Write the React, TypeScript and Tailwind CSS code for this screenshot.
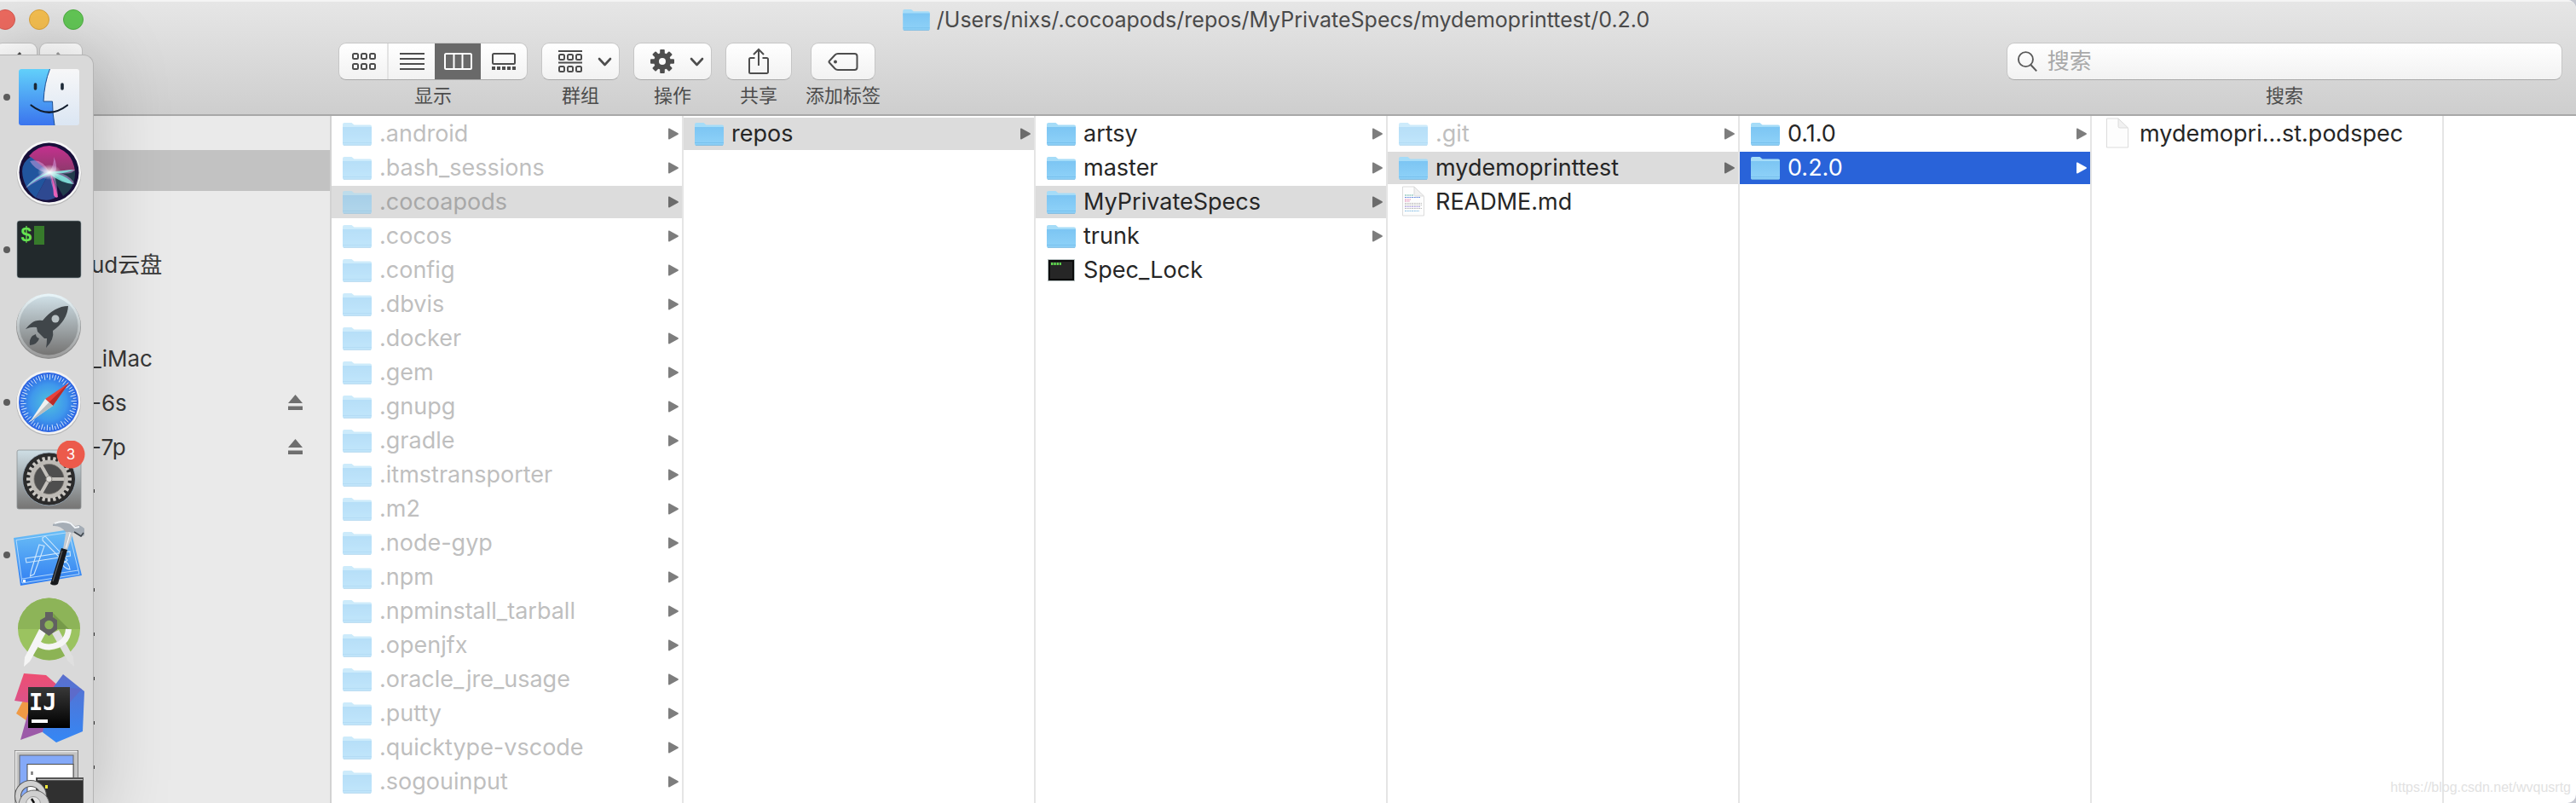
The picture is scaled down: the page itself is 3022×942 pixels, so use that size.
import type { ReactNode } from 'react';
import clsx from 'clsx';

type Kind = 'folder' | 'doc' | 'markdown' | 'exec';

interface Entry {
  name: string;
  kind?: Kind;
  hidden?: boolean;
  state?: 'path' | 'active';
}

const hiddenFolders = [
  '.android', '.bash_sessions', '.cocoapods', '.cocos', '.config', '.dbvis', '.docker',
  '.gem', '.gnupg', '.gradle', '.itmstransporter', '.m2', '.node-gyp', '.npm',
  '.npminstall_tarball', '.openjfx', '.oracle_jre_usage', '.putty', '.quicktype-vscode',
  '.sogouinput',
];

const columns: Entry[][] = [
  hiddenFolders.map((name) => ({
    name,
    hidden: true,
    state: name === '.cocoapods' ? 'path' : undefined,
  })),
  [{ name: 'repos', state: 'path' }],
  [
    { name: 'artsy' },
    { name: 'master' },
    { name: 'MyPrivateSpecs', state: 'path' },
    { name: 'trunk' },
    { name: 'Spec_Lock', kind: 'exec' },
  ],
  [
    { name: '.git', hidden: true },
    { name: 'mydemoprinttest', state: 'path' },
    { name: 'README.md', kind: 'markdown' },
  ],
  [{ name: '0.1.0' }, { name: '0.2.0', state: 'active' }],
  [{ name: 'mydemopri...st.podspec', kind: 'doc' }],
];

function FolderShape() {
  return (
    <>
      <path d="M0 3a2 2 0 0 1 2-2h8.500l3 2.500H32a2 2 0 0 1 2 2V10H0z" fill="#a5dcf8" />
      <path d="M0 6h34v20a1.500 1.500 0 0 1-1.500 1.500h-31A1.500 1.500 0 0 1 0 26z" fill="url(#folder)" />
      <path d="M0 24.500h34" stroke="#74bdea" strokeWidth="0.800" />
      <path d="M1 27.300h32" stroke="#6fb2dc" strokeWidth="0.800" />
    </>
  );
}

function EntryIcon({ kind = 'folder', faded }: { kind?: Kind; faded?: boolean }) {
  if (kind === 'folder') {
    return (
      <svg className={clsx('h-7 w-[34px] shrink-0', faded && 'opacity-55')} viewBox="0 0 34 28">
        <FolderShape />
      </svg>
    );
  }
  if (kind === 'exec') {
    return (
      <svg className="h-7 w-[34px] shrink-0" viewBox="0 0 34 28">
        <rect x="1" y="1" width="32" height="26" fill="#b5bfc0" />
        <rect x="2" y="2" width="30" height="24" fill="#0c0c0c" />
        <rect x="4" y="4" width="26" height="20" fill="#262626" />
        <path d="M5 6.500h2.500M8.300 6.500h2.500M11.600 6.500h2.500M14.900 6.500h2" stroke="#5fd84f" strokeWidth="3.200" />
      </svg>
    );
  }
  return (
    <svg className="h-[38px] w-[34px] shrink-0" viewBox="0 0 34 38">
      <path d="M4.500 1H18l11.500 11.500V35h-25z" fill="#fdfdfd" stroke="#dcdcdc" />
      <path d="M18 1v9.500q0 1.500 2 1.500h9.500z" fill="#f1f1f1" stroke="#d6d6d6" strokeWidth="0.800" />
      {kind === 'markdown' && (
        <g strokeWidth="1.200" strokeDasharray="2 0.700">
          <path d="M7 11h10" stroke="#6bb5a8" />
          <path d="M7 13.500h18" stroke="#6d8fe0" />
          <path d="M7 16h7M7 18h6" stroke="#e58bb5" />
          <path d="M7 20.500h20M7 22.500h20" stroke="#bdbdbd" />
          <path d="M7 24.500h18" stroke="#a99be0" />
          <path d="M7 26.500h20" stroke="#bdbdbd" />
          <path d="M7 29.500h17" stroke="#8fc4e8" />
        </g>
      )}
    </svg>
  );
}

function EntryRow({ entry }: { entry: Entry }) {
  const { name, kind = 'folder', hidden, state } = entry;
  return (
    <li>
      <button
        type="button"
        className={clsx(
          'flex h-[38px] w-full items-center gap-[9px] pl-[13px] pr-1 text-left',
          state === 'path' && 'bg-[#dcdcdc]',
          state === 'active' && 'bg-[#2963d9]',
        )}
      >
        <EntryIcon kind={kind} faded={hidden} />
        <span
          className={clsx(
            'flex-1 whitespace-nowrap',
            state === 'active' ? 'text-white' : hidden ? (state ? 'text-[#a8a8a8]' : 'text-[#bfbfbf]') : 'text-[#262626]',
          )}
        >
          {name}
        </span>
        {kind === 'folder' && (
          <svg
            className={clsx('h-3.5 w-3', state === 'active' ? 'text-white' : state ? 'text-[#6b6b6b]' : 'text-[#7d7d7d]')}
            viewBox="0 0 12 14"
          >
            <path d="M0.800 1.200v11.600L11.200 7z" fill="currentColor" stroke="currentColor" strokeWidth="1.500" strokeLinejoin="round" />
          </svg>
        )}
      </button>
    </li>
  );
}

const boxClass =
  'h-11 rounded-[9px] border border-[#c6c6c6] border-b-[#a9a9a9] bg-linear-to-b from-white to-[#f2f2f2]';

function ToolButton({ label, width, children }: { label: string; width: string; children: ReactNode }) {
  return (
    <label className="flex flex-col items-center gap-1.5">
      <button type="button" className={clsx(boxClass, width, 'flex items-center justify-center')}>
        {children}
      </button>
      <span className="text-[22px] leading-6 text-[#4c4c4c]">{label}</span>
    </label>
  );
}

function Chevron() {
  return (
    <svg className="h-10 w-5" viewBox="0 0 20 40">
      <path d="M4 17l6.500 7 6.500-7" fill="none" stroke="#4d4d4d" strokeWidth="2.600" strokeLinecap="round" strokeLinejoin="round" />
    </svg>
  );
}

function Squares({ y }: { y: number }) {
  return (
    <g fill="none" stroke="#4d4d4d" strokeWidth="2">
      <rect x="1" y={y} width="6" height="6" rx="1.500" />
      <rect x="11" y={y} width="6" height="6" rx="1.500" />
      <rect x="21" y={y} width="6" height="6" rx="1.500" />
    </g>
  );
}

const views = [
  {
    name: '图标',
    icon: (
      <>
        <Squares y={5} />
        <Squares y={17} />
      </>
    ),
  },
  { name: '列表', icon: <path d="M0 5h29M0 11h29M0 17h29M0 23h29" stroke="#4d4d4d" strokeWidth="2" /> },
  {
    name: '分栏',
    icon: (
      <g fill="none" stroke="white" strokeWidth="2">
        <rect x="-1" y="5" width="31" height="18" rx="1.500" />
        <path d="M9.500 5v18M19.500 5v18" />
      </g>
    ),
  },
  {
    name: '画廊',
    icon: (
      <g fill="none" stroke="#4d4d4d" strokeWidth="2">
        <rect x="1" y="5" width="26" height="12" rx="1.500" />
        <path d="M0 22h28" strokeWidth="4" strokeDasharray="4 2" />
      </g>
    ),
  },
];

function Toolbar() {
  return (
    <div className="flex items-start">
      <div className="-ml-1.5 flex gap-0.5">
        <button type="button" aria-label="后退" className={clsx(boxClass, 'flex w-[50px] items-center justify-center')}>
          <svg className="h-6 w-4" viewBox="0 0 16 24">
            <path d="M13 2L4 12l9 10" fill="none" stroke="#4d4d4d" strokeWidth="3" />
          </svg>
        </button>
        <button type="button" aria-label="前进" className={clsx(boxClass, 'flex w-[51px] items-center justify-center')}>
          <svg className="h-6 w-4" viewBox="0 0 16 24">
            <path d="M3 2l9 10-9 10" fill="none" stroke="#9c9c9c" strokeWidth="3" />
          </svg>
        </button>
      </div>

      <div className="ml-[300px] flex gap-4">
        <div className="flex flex-col items-center gap-1.5">
          <div className={clsx(boxClass, 'flex w-[222px] overflow-hidden')}>
            {views.map((view, i) => (
              <button
                key={view.name}
                type="button"
                aria-label={view.name}
                className={clsx(
                  'flex flex-1 items-center justify-center',
                  i === 0 && 'border-r-2 border-[#e3e3e3] pl-0.5',
                  i === 2 && 'bg-[#696969]',
                )}
              >
                <svg className="h-7 w-7 overflow-visible" viewBox="0 0 28 28">
                  {view.icon}
                </svg>
              </button>
            ))}
          </div>
          <span className="text-[22px] leading-6 text-[#4c4c4c]">显示</span>
        </div>

        <ToolButton label="群组" width="w-[92px] gap-4 pl-3">
          <svg className="h-7 w-7 shrink-0" viewBox="0 0 28 28">
            <path d="M0 2h28M0 15.500h28" stroke="#4d4d4d" strokeWidth="2" />
            <Squares y={6} />
            <Squares y={20} />
          </svg>
          <Chevron />
        </ToolButton>

        <ToolButton label="操作" width="w-[92px] gap-4 pl-3">
          <svg className="h-7 w-7 shrink-0" viewBox="-14 -14 28 28">
            {[0, 45, 90, 135].map((deg) => (
              <rect key={deg} x="-2.800" y="-14" width="5.600" height="28" rx="1" transform={`rotate(${deg})`} fill="#4d4d4d" />
            ))}
            <circle r="7" fill="none" stroke="#4d4d4d" strokeWidth="6" />
            <circle r="4" fill="#fafafa" />
          </svg>
          <Chevron />
        </ToolButton>

        <ToolButton label="共享" width="w-[78px]">
          <svg className="h-8 w-7" viewBox="0 0 28 32">
            <path
              d="M9.500 12H4.500a1.500 1.500 0 0 0-1.500 1.500v15A1.500 1.500 0 0 0 4.500 30h19a1.500 1.500 0 0 0 1.500-1.500v-15a1.500 1.500 0 0 0-1.500-1.500h-5M14 21V2M8 8l6-6 6 6"
              fill="none"
              stroke="#4d4d4d"
              strokeWidth="2"
            />
          </svg>
        </ToolButton>

        <ToolButton label="添加标签" width="w-[76px]">
          <svg className="h-6 w-9" viewBox="0 0 36 24">
            <path
              d="M12 3h19.500a3 3 0 0 1 3 3v13a3 3 0 0 1-3 3H12q-2 0-3.500-1.500L2 13.500q-1-1 0-2l6.500-7Q10 3 12 3z"
              fill="none"
              stroke="#4d4d4d"
              strokeWidth="2"
            />
            <circle cx="9" cy="12.500" r="2" fill="#4d4d4d" />
          </svg>
        </ToolButton>
      </div>

      <div className="ml-auto mr-4 flex flex-col items-center gap-1.5">
        <div className={clsx(boxClass, 'flex w-[652px] items-center gap-3 px-3')}>
          <svg className="h-[26px] w-6" viewBox="0 0 24 26">
            <circle cx="10" cy="10.500" r="9" fill="none" stroke="#5a5a5a" strokeWidth="2" />
            <path d="M16.500 17.500L23.500 25" stroke="#5a5a5a" strokeWidth="2.200" />
          </svg>
          <input
            id="search"
            type="text"
            placeholder="搜索"
            className="w-full bg-transparent text-[26px] leading-8 outline-none placeholder:text-[#a9a9a9]"
          />
        </div>
        <label htmlFor="search" className="text-[22px] leading-6 text-[#4c4c4c]">
          搜索
        </label>
      </div>
    </div>
  );
}

function Header() {
  return (
    <header className="h-[136px] shrink-0 border-t-2 border-b-2 border-t-[#f4f4f4] border-b-[#a8a8a8] bg-linear-to-b from-[#e6e6e6] to-[#cecece]">
      <div className="grid h-12 grid-cols-[1fr_auto_1fr] items-center pb-1.5 pr-7">
        <div className="-ml-1.5 flex gap-4">
          <button type="button" aria-label="关闭" className="size-6 rounded-full border border-[#d5574f] bg-[#ec6a5f]" />
          <button type="button" aria-label="最小化" className="size-6 rounded-full border border-[#d9a23c] bg-[#f4be50]" />
          <button type="button" aria-label="缩放" className="size-6 rounded-full border border-[#4fac43] bg-[#62c655]" />
        </div>
        <h1 className="flex items-center gap-2 text-[25px] leading-8 text-[#4a4a4a]">
          <svg className="h-[26px] w-8" viewBox="0 0 34 28">
            <FolderShape />
          </svg>
          /Users/nixs/.cocoapods/repos/MyPrivateSpecs/mydemoprinttest/0.2.0
        </h1>
      </div>
      <Toolbar />
    </header>
  );
}

function SidebarItem({ label, ejectable }: { label?: string; ejectable?: boolean }) {
  return (
    <li className="flex h-[52px] items-center justify-between pl-[107px] pr-8">
      {label ? <span>{label}</span> : <span className="h-1 w-1 bg-[#3a3a3a]" />}
      {ejectable && (
        <button type="button" aria-label={`推出 ${label}`}>
          <svg className="h-[18px] w-[17px]" viewBox="0 0 17 18">
            <path d="M8.500 0L17 10H0zM0 13.500h17v4.500H0z" fill="#6f6f6f" />
          </svg>
        </button>
      )}
    </li>
  );
}

function Sidebar() {
  return (
    <nav className="w-[389px] shrink-0 overflow-hidden border-r-2 border-[#d2d2d2] bg-[#eaeaea] pt-10 text-[26px] text-[#383838]">
      <div className="h-12 bg-[#c2c2c2]" />
      <ul className="mt-15">
        <SidebarItem label="ud云盘" />
      </ul>
      <ul className="mt-[58px]">
        <SidebarItem label="_iMac" />
        <SidebarItem label="-6s" ejectable />
        <SidebarItem label="-7p" ejectable />
        <SidebarItem />
      </ul>
      <ul className="mt-16">
        <SidebarItem />
        <SidebarItem />
        <SidebarItem />
        <SidebarItem />
        <SidebarItem />
      </ul>
    </nav>
  );
}

const teeth = Array.from({ length: 24 }, (_, i) => i * 15);
const ticks = Array.from({ length: 60 }, (_, i) => i * 6);

const dockApps: { name: string; running?: boolean; art: ReactNode }[] = [
  {
    name: 'Finder',
    running: true,
    art: (
      <>
        <rect x="10" y="12" width="71" height="66" rx="3" fill="url(#paper)" />
        <path d="M13 12h33.500Q40 28 39 50h10.500q0 14 2.500 28H13a3 3 0 0 1-3-3V15a3 3 0 0 1 3-3z" fill="url(#finder)" />
        <path d="M46.500 12Q40 28 39 50h10.500q0 14 2.500 28" fill="none" stroke="#1d4f92" strokeWidth="1" />
        <path d="M29.500 30v5M61 30v5" stroke="#1c2836" strokeWidth="3.600" strokeLinecap="round" />
        <path d="M24.500 54.500Q45.500 71 67 54.500" fill="none" stroke="#111c2c" strokeWidth="2.200" strokeLinecap="round" />
      </>
    ),
  },
  {
    name: 'Siri',
    art: (
      <>
        <circle cx="45.500" cy="45.500" r="38" fill="#b9b9b9" />
        <circle cx="45.500" cy="44.500" r="37.500" fill="#f6f6f6" />
        <circle cx="45.500" cy="44.500" r="35" fill="#170f3a" />
        <path d="M22 25Q32 13 46 13q27 4 30 30L46 44z" fill="url(#siriPink)" />
        <path d="M14 43Q14 32 24 26l22 18-16 30Q15 62 14 43z" fill="#2467b8" opacity="0.800" />
        <path d="M46 44L30 74q14 6 24-1z" fill="#3457a8" opacity="0.800" />
        <path d="M46 44l30-2q1 20-14 30z" fill="#22404f" opacity="0.900" />
        <path d="M23 31q14-4 23 13 6-10 5-18 5 10 2 18 13-3 23-3-4 6-16 4 14 6 15 13-10 0-23-11 3 12 4 25-8-8-9-24-12 3-29 15 6-10 22-19-12-4-17-13z" fill="#d7a4e8" opacity="0.500" />
        <path d="M18 62q10-11 26-18 18-2 31-3-10 5-22 4 16 5 21 13-14-1-28-12-14 5-28 16z" fill="#7ff0e2" opacity="0.800" />
        <path d="M47 45q4 8 9 28-3 2-5-2-1-16-4-26z" fill="#e660b8" />
        <ellipse cx="46" cy="44" rx="14" ry="9" fill="url(#glow)" />
      </>
    ),
  },
  {
    name: 'iTerm',
    running: true,
    art: (
      <>
        <rect x="8" y="11" width="75" height="67" rx="3" fill="#22292c" stroke="#8fa0a5" strokeWidth="0.600" />
        <text x="12" y="35" fill="#67e251" fontSize="23" fontWeight="bold" className="font-['Liberation_Mono',monospace]">
          $
        </text>
        <rect x="28" y="17" width="12" height="22" fill="#377a2b" />
      </>
    ),
  },
  {
    name: 'Launchpad',
    art: (
      <>
        <circle cx="45" cy="45" r="38" fill="#8c8c8c" />
        <circle cx="45" cy="44" r="37.500" fill="url(#ring)" />
        <circle cx="45" cy="44" r="34.500" fill="url(#steel)" />
        <path d="M68 21q-16 0-30 17-8-1-13 3-4 3-7 7 7-3 13-2l1 5 8 8 3 0q0 6-1 11 5-5 7-10 2-5 1-10Q67 38 68 21z" fill="#40464a" />
        <path d="M23 67q-1-7 3-11l4-2q0 4 4 5-2 7-11 8z" fill="#40464a" />
        <circle cx="53" cy="36" r="4.500" fill="#b9c2c5" />
      </>
    ),
  },
  {
    name: 'Safari',
    running: true,
    art: (
      <>
        <circle cx="45" cy="46" r="38" fill="#b8b8b8" />
        <circle cx="45" cy="45" r="37.500" fill="#f3f3f3" />
        <circle cx="45" cy="45" r="35" fill="url(#safari)" />
        {ticks.map((deg, i) => (
          <path
            key={deg}
            d={i % 2 ? 'M45 12v4' : 'M45 12v6.500'}
            stroke="#d9eafc"
            strokeWidth="0.900"
            transform={`rotate(${deg + 3} 45 45)`}
          />
        ))}
        <path d="M69 22L41 41l9 8z" fill="#e8413a" />
        <path d="M69 22L45.500 45l4.500 4z" fill="#b92c29" />
        <path d="M23 68l18-27 9 8z" fill="#f0f0f0" />
        <path d="M23 68l22.500-23 4.500 4z" fill="#b7bcbe" />
      </>
    ),
  },
  {
    name: '系统偏好设置',
    art: (
      <>
        <rect x="8" y="11" width="75" height="69" rx="2" fill="url(#steel)" stroke="#8e9396" strokeWidth="0.800" />
        <circle cx="45.500" cy="45" r="31" fill="#2b2b2b" stroke="#9fb0bf" strokeWidth="0.800" />
        {teeth.map((deg) => (
          <rect key={deg} x="43.800" y="18.500" width="3.400" height="7" fill="#cbc8c3" transform={`rotate(${deg} 45.5 45)`} />
        ))}
        <circle cx="45.500" cy="45" r="20" fill="#4e4e4e" stroke="#bdbab5" strokeWidth="5" />
        <circle cx="45.500" cy="45" r="17.500" fill="none" stroke="#77746f" strokeWidth="0.800" />
        <path d="M45.500 45h18M45.500 45l-9-16M45.500 45l-9 16" stroke="#c3c0bb" strokeWidth="4" />
        <circle cx="45.500" cy="45" r="3.500" fill="#dcdad6" stroke="#8a8782" />
        <circle cx="71" cy="16" r="16.500" fill="#ec5a4b" />
        <text x="71" y="22" textAnchor="middle" fill="white" fontSize="17">
          3
        </text>
      </>
    ),
  },
  {
    name: 'Xcode',
    running: true,
    art: (
      <>
        <path d="M4 25l67-10 13 54-72 12z" fill="url(#xcode)" />
        <path d="M7 27.500l62-9 12 49-67 10.500z" fill="none" stroke="#bfe0fb" strokeWidth="0.900" />
        <g fill="none" stroke="#cfe8fc" strokeWidth="1.100">
          <path d="M18 49l52-8 .5 5-51.500 8zM34 33l6 1.500-12 33-4.500 2.500 1-6zM38 25q3-3 5 0l24 26-3 3-26-26zM63 52q6 2 7 10-7-1-10-8" />
          <path d="M14 73l66-10" strokeWidth="0.800" />
        </g>
        <rect x="15" y="74" width="3" height="3" fill="white" />
        <path d="M66 14l9 2-8 23-5-1z" fill="#c7ccd2" />
        <path d="M68 18l2.500.5-5 18" stroke="white" fill="none" />
        <path d="M60 37l7 2-11 40q-4 3-9 0z" fill="#17191c" />
        <path d="M61 40l-11 36" stroke="#5c6066" strokeWidth="1.200" />
        <path d="M50 9q8-5 21-2l5 4 5-1q4 2 6 4v8l-4 2-8-5-10-1q-6-8-15-7z" fill="#a5adb6" />
        <path d="M52 8q10-4 19 0l5 5 5-1" stroke="#f3f6f9" strokeWidth="1.800" fill="none" />
        <path d="M75 18l8 5 3-4" stroke="#3f454c" strokeWidth="1.500" fill="none" />
      </>
    ),
  },
  {
    name: 'Android Studio',
    art: (
      <>
        <circle cx="45.500" cy="42" r="36.500" fill="#9bc360" />
        <path d="M9 42a36.500 36.500 0 0 1 73 0z" fill="#8db458" />
        <path d="M50 23l19 19H52z" fill="#769a49" />
        <path d="M34 64q12 6 25 0l9 7q-22 15-44 0z" fill="#82a84f" opacity="0.600" />
        <path d="M49 47l8-4 17 32 1 11-7-6z" fill="#dfdfdf" />
        <path d="M42 46l-8-4-17 33-1 11 7-6z" fill="#f5f5f5" />
        <path d="M33 59q5 4 12.500 4Q67 61 68.500 42" fill="none" stroke="#f5f5f5" strokeWidth="7" />
        <path d="M41 22h9v6l5 3.500v11L45.500 50 35 42.500v-11l6-3.500z" fill="#616161" />
        <circle cx="45.500" cy="37" r="5.200" fill="#8db458" />
      </>
    ),
  },
  {
    name: 'IntelliJ IDEA',
    art: (
      <>
        <path d="M7 51l8-15h14v30z" fill="#f09a45" />
        <path d="M16 4l26 2 16 14-24 20-29-4z" fill="url(#ijPink)" />
        <path d="M21 50l-9 32 36-13z" fill="#9c5aa8" />
        <path d="M62 5l25 20-2 47-31 13-16-12 12-52z" fill="url(#ijBlue)" />
        <path d="M70 21l14 1-14 16z" fill="#6267c4" opacity="0.700" />
        <rect x="21" y="20" width="49" height="48" fill="url(#ijBlack)" />
        <text x="22" y="47" fill="white" fontSize="27" fontWeight="bold" className="font-['DejaVu_Sans_Mono',monospace]">
          IJ
        </text>
        <rect x="25" y="58" width="19" height="4" fill="white" />
      </>
    ),
  },
  {
    name: 'PuTTY',
    art: (
      <>
        <rect x="5.500" y="5.500" width="74" height="90" fill="#c4c4c4" stroke="#7c7c7c" />
        <path d="M6.500 95V6.500h72" stroke="#ededed" strokeWidth="1.500" fill="none" />
        <rect x="11" y="11" width="63" height="80" fill="#84a9f8" stroke="#646464" />
        <rect x="20" y="21.500" width="54" height="70" fill="white" stroke="#4c4c4c" />
        <path d="M25.500 30v4" stroke="#777" strokeWidth="2.500" />
        <rect x="30.500" y="37.500" width="55" height="60" fill="#303030" stroke="#555" />
        <path d="M32 39.500h53" stroke="#c4c4c4" strokeWidth="1.500" />
        <rect x="41" y="46" width="3" height="4" fill="#f1e93a" />
        <circle cx="24" cy="59" r="15" fill="none" stroke="#555" strokeWidth="8" />
        <circle cx="24" cy="59" r="15" fill="none" stroke="#d0d0d0" strokeWidth="6" />
        <circle cx="28" cy="70" r="18" fill="#cfcfcf" stroke="#666" />
        <circle cx="27" cy="68" r="8.500" fill="#e4e4e4" stroke="#999" />
        <path d="M25 62l3 5" stroke="#111" strokeWidth="2.500" />
      </>
    ),
  },
];

function Dock() {
  return (
    <aside className="absolute left-0 top-16 w-[110px] rounded-tr-xl border-t border-r border-[#b4b4b4] bg-[#d9d9d9] pt-1 shadow-[0_0_90px_rgba(0,0,0,0.22)]">
      <ul className="flex h-[896px] flex-col">
        {dockApps.map((app) => (
          <li key={app.name} className="flex min-h-0 flex-1 items-center pl-1">
            <span className={clsx('size-2 rounded-full', app.running && 'bg-[#5c5c5c]')} />
            <button type="button" aria-label={app.name}>
              <svg className="size-[90px]" viewBox="0 0 90 90">
                {app.art}
              </svg>
            </button>
          </li>
        ))}
      </ul>
    </aside>
  );
}

function Gradient({ id, from, to }: { id: string; from: string; to: string }) {
  return (
    <linearGradient id={id} x1="0" y1="0" x2="0" y2="1">
      <stop offset="0" stopColor={from} />
      <stop offset="1" stopColor={to} />
    </linearGradient>
  );
}

function Defs() {
  return (
    <svg className="absolute size-0" aria-hidden="true">
      <defs>
        <Gradient id="folder" from="#7cc5f3" to="#8fd2f8" />
        <Gradient id="finder" from="#62d0fa" to="#3a74ee" />
        <Gradient id="paper" from="#f7f7f8" to="#dbe6f3" />
        <Gradient id="siriPink" from="#c5308f" to="#8c3a6b" />
        <Gradient id="ring" from="#e9f6fa" to="#9a9a9a" />
        <Gradient id="steel" from="#cfdfe6" to="#757473" />
        <Gradient id="xcode" from="#6cc0f6" to="#2f7df2" />
        <Gradient id="ijPink" from="#ee4e72" to="#d9538b" />
        <Gradient id="ijBlue" from="#5b6fcd" to="#3487f5" />
        <Gradient id="ijBlack" from="#383838" to="#000000" />
        <radialGradient id="safari">
          <stop offset="0" stopColor="#4fc0dd" />
          <stop offset="0.600" stopColor="#3f98ec" />
          <stop offset="1" stopColor="#2b62e2" />
        </radialGradient>
        <radialGradient id="glow">
          <stop offset="0" stopColor="#ffffff" />
          <stop offset="1" stopColor="#ffffff" stopOpacity="0" />
        </radialGradient>
      </defs>
    </svg>
  );
}

export default function App() {
  return (
    <div className="relative h-screen overflow-hidden bg-[#c3c6cf] font-['Inter','Noto_Sans_CJK_SC',sans-serif]">
      <Defs />
      <div className="flex h-full flex-col overflow-hidden rounded-r-[10px] bg-white">
        <Header />
        <main className="flex min-h-0 flex-1">
          <Sidebar />
          {columns.map((entries, i) => (
            <ul
              key={i}
              className="flex w-[413px] shrink-0 flex-col gap-0.5 overflow-hidden border-r-2 border-[#e5e5e5] pt-0.5 text-[27px] leading-8"
            >
              {entries.map((entry) => (
                <EntryRow key={entry.name} entry={entry} />
              ))}
            </ul>
          ))}
        </main>
      </div>
      <Dock />
      <p className="absolute bottom-1.5 right-1.5 font-['Liberation_Sans',sans-serif] text-base text-[#e2e2e2]">
        https://blog.csdn.net/wvqusrtg
      </p>
    </div>
  );
}
